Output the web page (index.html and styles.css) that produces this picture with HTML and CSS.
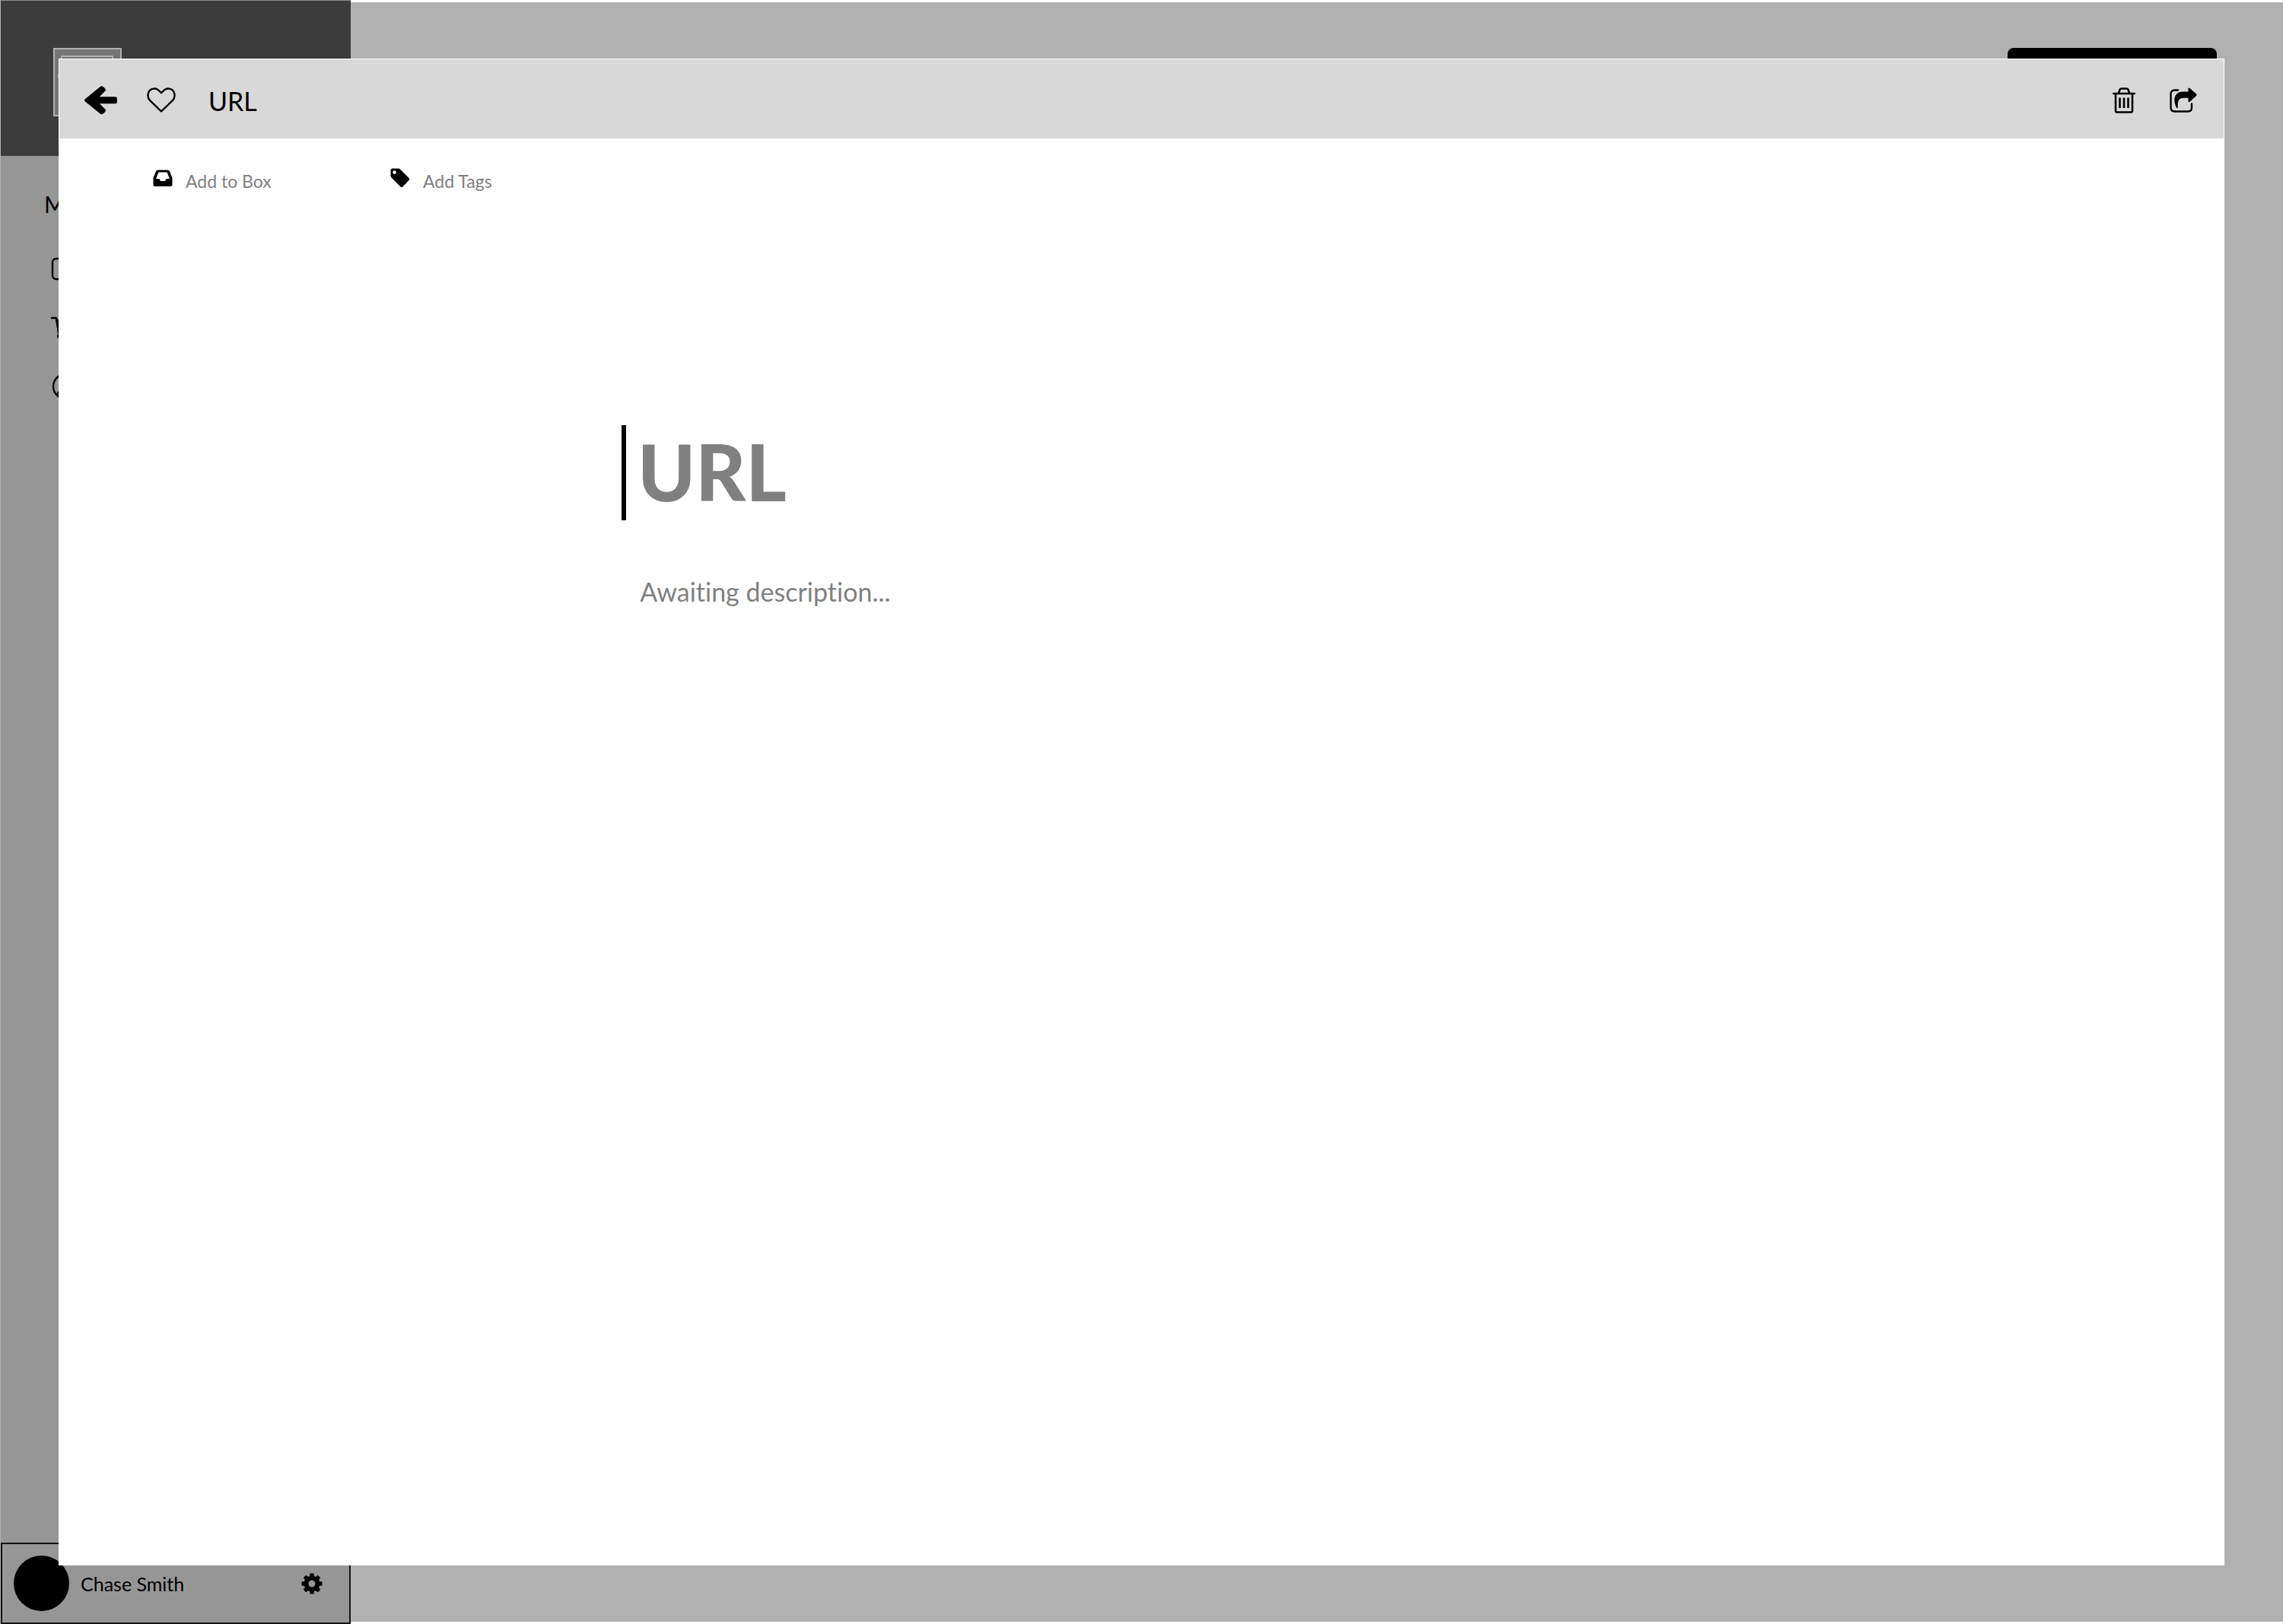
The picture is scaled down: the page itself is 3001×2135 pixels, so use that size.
FILE: index.html
```html
<!DOCTYPE html>
<html lang="en">
<head>
<meta charset="utf-8">
<title>URL</title>
<link rel="stylesheet" href="styles.css">
</head>
<body>
<div class="app">
  <aside class="sidebar">
    <div class="brand">
      <svg class="logo" width="90" height="90" viewBox="0 0 90 90" aria-hidden="true">
        <rect x="1" y="1" width="88" height="88" fill="#757575" stroke="#b0b0b0" stroke-width="2"/>
        <rect x="11" y="11" width="67" height="67" fill="#757575" stroke="#b0b0b0" stroke-width="2"/>
        <circle cx="10" cy="37" r="4" fill="#b0b0b0"/>
      </svg>
    </div>
    <nav class="nav">
      <h2 class="nav-title">Menu</h2>
      <a class="nav-link" href="#" aria-label="Boxes">
        <svg width="34" height="34" viewBox="0 0 34 34"><rect x="3" y="3" width="28" height="27" rx="5" fill="none" stroke="#000" stroke-width="2.4"/></svg>
      </a>
      <a class="nav-link" href="#" aria-label="Cart">
        <svg width="34" height="34" viewBox="0 0 34 34"><path d="M2 4H8L11 24H29" fill="none" stroke="#000" stroke-width="2.4" stroke-linecap="round" stroke-linejoin="round"/><path d="M7 6H32L28 21H10Z"/><circle cx="12" cy="28" r="3"/><circle cx="26" cy="28" r="3"/></svg>
      </a>
      <a class="nav-link" href="#" aria-label="Profile">
        <svg width="36" height="34" viewBox="0 0 36 34"><circle cx="20" cy="17" r="16" fill="none" stroke="#000" stroke-width="2.4"/><path d="M8 29C9 23 13 20 20 20S30 23 31 28Q20 38 8 29Z"/></svg>
      </a>
    </nav>
    <footer class="account">
      <span class="avatar"></span>
      <span class="account-name">Chase Smith</span>
      <button class="icon-button" type="button" aria-label="Settings">
        <svg width="28" height="28" viewBox="0 0 28 28"><g transform="translate(14 14)"><circle r="7.5" fill="none" stroke="#000" stroke-width="6"/><g><rect x="-2.7" y="-13.5" width="5.4" height="6" rx="1"/><rect x="-2.7" y="7.5" width="5.4" height="6" rx="1"/><rect x="-13.5" y="-2.7" width="6" height="5.4" rx="1"/><rect x="7.5" y="-2.7" width="6" height="5.4" rx="1"/></g><g transform="rotate(45)"><rect x="-2.7" y="-13.5" width="5.4" height="6" rx="1"/><rect x="-2.7" y="7.5" width="5.4" height="6" rx="1"/><rect x="-13.5" y="-2.7" width="6" height="5.4" rx="1"/><rect x="7.5" y="-2.7" width="6" height="5.4" rx="1"/></g></g></svg>
      </button>
    </footer>
  </aside>
  <main class="main">
    <button class="new-button" type="button" aria-label="New"></button>
  </main>
</div>

<section class="modal" role="dialog" aria-label="URL">
  <header class="modal-header">
    <button class="icon-button back" type="button" aria-label="Back">
      <svg width="44" height="40" viewBox="0 0 44 40"><path d="M3 19.7 23.2 3.2Q24.5 3 27 6.2L16 17.2H41.8V22.2H16L27 33.2Q24.500 36.400 23.200 36.200Z" stroke="#000" stroke-width="4" stroke-linejoin="round"/></svg>
    </button>
    <button class="icon-button" type="button" aria-label="Favorite">
      <svg width="38" height="34" viewBox="0 0 38 34"><path d="M19 31.5 4.2 17.2C-.5 12.4 1 2.6 8.5 1.6 13.5 .8 16 4 19 7.2 22 4 24.5 .8 29.5 1.6 37 2.6 38.500 12.400 33.800 17.200Z" fill="none" stroke="#000" stroke-width="2.4" stroke-linejoin="round"/></svg>
    </button>
    <h1 class="modal-title">URL</h1>
    <div class="actions">
      <button class="icon-button" type="button" aria-label="Delete">
        <svg width="30" height="34" viewBox="0 0 30 34" fill="none" stroke="#000" stroke-width="2.6"><path d="M1.300 8H28.700M8 7.500 9.500 2.800Q10 1.500 11.500 1.500H18.500Q20 1.500 20.500 2.800L22 7.500M4 8V30.500Q4 32.500 6 32.500H24Q26 32.500 26 30.500V8" stroke-linecap="round"/><path d="M9.500 13.500V27M15 13.500V27M20.500 13.500V27"/></svg>
      </button>
      <button class="icon-button" type="button" aria-label="Share">
        <svg width="36" height="34" viewBox="0 0 36 34"><path d="M11 3.500H6.500Q1.500 3.500 1.500 8.500V26.500Q1.500 31.500 6.500 31.500H24Q29 31.500 29 26.500V21.500" fill="none" stroke="#000" stroke-width="2.400" stroke-linecap="round"/><path d="M24.500 1Q25.200 0 26.300 .8L35 8.600Q36 9.800 35 10.900L26.300 19Q25 19.800 24.500 18.600V13.800H19C12 13.800 10.500 17 10.700 26.500Q10 28.200 9 26.500C4 17 5.500 5.500 18 5.500H24.500Z"/></svg>
      </button>
    </div>
  </header>
  <div class="meta">
    <button class="meta-button" type="button">
      <svg width="26" height="26" viewBox="0 0 26 26"><path fill-rule="evenodd" d="M6.500 2.500H19.500Q21.300 2.500 22 4L25.500 13V22Q25.500 24 23.500 24H2.500Q.5 24 .5 22V13L4 4Q4.700 2.500 6.500 2.500ZM7.500 5.500 4 14H8.300L10 17H16L17.700 14H22L18.500 5.500Z"/></svg>
      <span>Add to Box</span>
    </button>
    <button class="meta-button" type="button">
      <svg width="26" height="26" viewBox="0 0 26 26"><path fill-rule="evenodd" d="M3 .5H10.500Q12 .5 13 1.500L24.500 13Q26 14.500 24.500 16L16.500 24.500Q15 26 13.500 24.500L2 13Q.5 11.500 .5 10V3Q.5 .5 3 .5ZM5.500 3.300A2.300 2.300 0 1 0 5.500 7.900 2.300 2.300 0 1 0 5.500 3.300Z"/></svg>
      <span>Add Tags</span>
    </button>
  </div>
  <form class="editor">
    <input class="editor-title" type="text" placeholder="URL" aria-label="URL">
    <textarea class="editor-text" rows="1" placeholder="Awaiting description..." aria-label="Description"></textarea>
  </form>
</section>
</body>
</html>
```
FILE: styles.css
```css
* {
  box-sizing: border-box;
}

body {
  margin: 0;
  background: #fff;
  color: #000;
  font-family: Lato, "Noto Sans", sans-serif;
  font-size: 23px;
  font-variant-ligatures: none;
}

button,
input,
textarea {
  padding: 0;
  border: 0;
  background: none;
  color: inherit;
  font: inherit;
  font-variant-ligatures: none;
}

svg {
  display: block;
}

.app {
  display: flex;
  height: 100vh;
}

.sidebar {
  display: flex;
  flex-direction: column;
  width: 461px;
  border-left: 1px solid #b1b1b1;
  background: #969696;
}

.brand {
  height: 205px;
  padding: 62px 69px;
  border-top: 1px solid #8c8f8c;
  background: #3b3b3b;
}

.nav {
  display: flex;
  flex: 1;
  flex-direction: column;
  gap: 43px;
  padding: 45px 65px;
}

.nav-title {
  margin: 0 0 0 -8px;
  font-size: 30px;
  font-weight: 400;
  line-height: 36px;
}

.nav-link {
  width: 34px;
  color: #000;
}

.nav-title + .nav-link {
  margin-top: 8px;
}

.account {
  display: flex;
  align-items: center;
  gap: 15px;
  height: 107px;
  padding: 0 35px 0 15px;
  border: 2px solid #141414;
}

.avatar {
  width: 73px;
  height: 73px;
  border-radius: 50%;
  background: #000;
}

.account-name {
  flex: 1;
  font-size: 25px;
}

.main {
  display: flex;
  flex: 1;
  justify-content: flex-end;
  margin: 3px 0;
  padding: 60px 87px;
  background: #b1b1b1;
}

.new-button {
  width: 275px;
  height: 80px;
  border-radius: 8px;
  background: #000;
}

.modal {
  position: fixed;
  inset: 77px;
  background: #fff;
}

.modal-header {
  display: flex;
  align-items: center;
  height: 106px;
  padding: 4px 35px 0 32px;
  border: 1px solid #fff;
  background: #d8d8d8;
}

.back {
  margin-right: 39px;
}

.modal-title {
  flex: 1;
  margin: 0 0 0 43px;
  font-size: 34px;
  font-weight: 400;
}

.actions {
  display: flex;
  gap: 45px;
}

.meta {
  display: flex;
  gap: 156px;
  padding: 38px 124px;
}

.meta-button {
  display: flex;
  align-items: flex-start;
  gap: 17px;
  min-width: 156px;
  color: #808080;
  line-height: 34px;
}

.meta-button svg {
  fill: #000;
}

.editor {
  display: flex;
  flex-direction: column;
  gap: 70px;
  margin: 266px 26% 0;
}

.editor-title {
  width: 100%;
  height: 125px;
  padding: 0 0 4px 15px;
  border-left: 6px solid #000;
  font-size: 102px;
  font-weight: 900;
}

.editor-text {
  margin-left: 24px;
  font-size: 34px;
  line-height: 48px;
  resize: none;
}

::placeholder {
  color: #808080;
  opacity: 1;
}
```
